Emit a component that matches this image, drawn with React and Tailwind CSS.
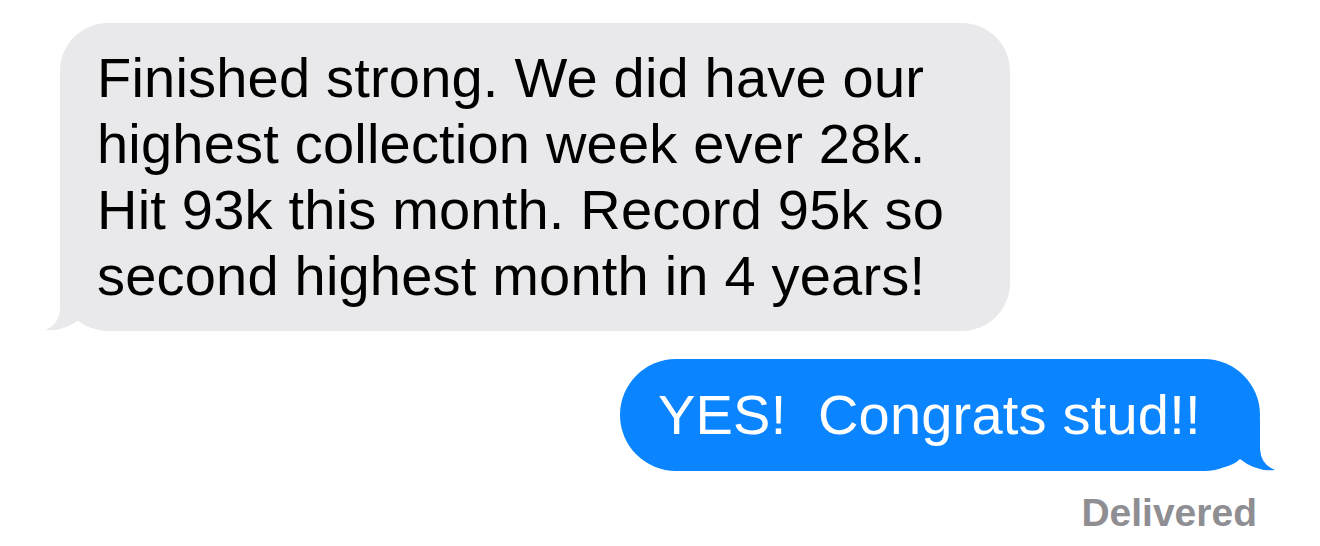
import React from 'react';

const received = [
  'Finished strong. We did have our',
  'highest collection week ever 28k.',
  'Hit 93k this month. Record 95k so',
  'second highest month in 4 years!',
];

const GreyTail = () => (
  <svg className="absolute left-[-16px] bottom-0" width="52" height="52" viewBox="0 0 52 52">
    <path d="M16,0 L16,30 Q15,46 1,51 Q20,53 36,40 Q42,46 52,48 L52,0 Z" fill="#e9e9eb" />
  </svg>
);

const BlueTail = () => (
  <svg className="absolute right-[-16px] bottom-0" width="52" height="52" viewBox="0 0 52 52">
    <path d="M36,0 L36,30 Q37,46 51,51 Q32,53 16,40 Q10,46 0,48 L0,0 Z" fill="#0a84ff" />
  </svg>
);

export default function App() {
  return (
    <div
      className="w-[1320px] h-[546px] bg-white overflow-hidden flex flex-col"
      style={{ fontFamily: '"Liberation Sans", Arial, sans-serif' }}
    >
      {/* incoming message */}
      <div className="relative self-start ml-[60px] mt-[23px] w-[950px] bg-[#e9e9eb] rounded-[48px] pl-[37px] py-[22px]">
        <GreyTail />
        <p className="relative text-[56px] leading-[66px] text-black tracking-[0.2px]">
          {received.map((line, i) => (
            <span key={i} className="block whitespace-nowrap">{line}</span>
          ))}
        </p>
      </div>

      {/* outgoing message */}
      <div className="relative self-end mr-[60px] mt-[28px] w-[640px] h-[112px] bg-[#0a84ff] rounded-[56px] pl-[38px] flex items-center">
        <BlueTail />
        <span className="relative text-[56px] leading-[66px] text-white whitespace-pre tracking-[0.2px]">
          YES!  Congrats stud!!
        </span>
      </div>

      <div className="self-end mr-[63px] mt-[18px] text-[39px] leading-[48px] font-bold text-[#8e8e93]">
        Delivered
      </div>
    </div>
  );
}
